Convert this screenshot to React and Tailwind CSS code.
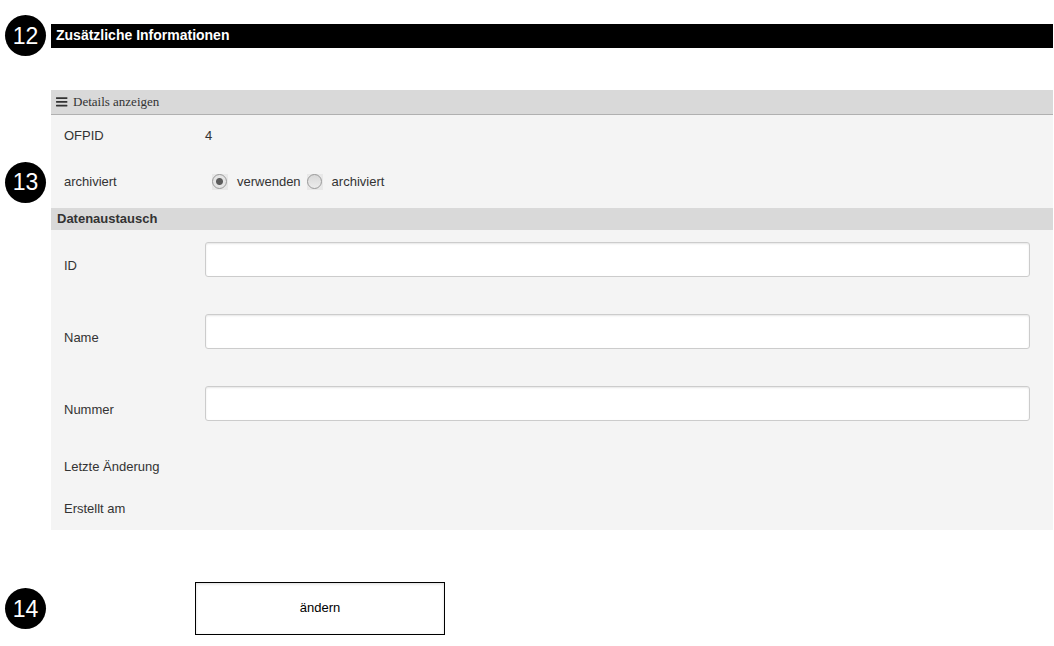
// ─── Additional Information Form ───
import React from 'react';

const exchangeFields = [
  { id: 'exchange-id', label: 'ID' },
  { id: 'exchange-name', label: 'Name' },
  { id: 'exchange-number', label: 'Nummer' },
];

const timestamps = ['Letzte Änderung', 'Erstellt am'];

const archiveOptions = [
  { value: 'use', label: 'verwenden' },
  { value: 'archived', label: 'archiviert' },
];

function StepBadge({ children }) {
  return (
    <span className="flex size-[41px] shrink-0 items-center justify-center rounded-full bg-black text-[23px] text-white">
      {children}
    </span>
  );
}

// Every row keeps the same gutter on the left for an optional step number
function Row({ step, className = '', children }) {
  return (
    <div className="flex items-center">
      <div className="flex w-[51px] shrink-0 pl-[5px]">{step && <StepBadge>{step}</StepBadge>}</div>
      <div className={`min-w-0 flex-1 ${className}`}>{children}</div>
    </div>
  );
}

function BarsIcon() {
  return (
    <svg width="12" height="10" viewBox="0 0 12 10" fill="currentColor" aria-hidden="true">
      <rect y="0.2" width="11.4" height="1.7" rx="0.4" />
      <rect y="4" width="11.4" height="1.7" rx="0.4" />
      <rect y="7.8" width="11.4" height="1.7" rx="0.4" />
    </svg>
  );
}

export default function App() {
  return (
    <form
      className="pt-[15px] pr-px font-['Liberation_Sans',Arial,sans-serif] text-[13px] leading-5 text-[#333]"
      onSubmit={(e) => e.preventDefault()}
    >
      <Row step="12">
        <h1 className="flex h-6 items-center bg-black px-[5px] pb-px text-sm font-bold text-white">
          Zusätzliche Informationen
        </h1>
      </Row>

      {/* Details panel */}
      <div className="mt-[34px]">
        <Row>
          <button
            type="button"
            className="flex h-[25px] w-full items-center gap-[5px] border-b border-[#b0b0b0] bg-[#d9d9d9] px-[5px] font-['Liberation_Serif','Times_New_Roman',serif]"
          >
            <BarsIcon />
            Details anzeigen
          </button>
        </Row>

        <Row className="flex h-[41px] items-center bg-[#f4f4f4] pl-[13px]">
          <span className="w-[141px]">OFPID</span>
          <span>4</span>
        </Row>

        <Row step="13" className="bg-[#f4f4f4] pl-[13px]">
          <div role="radiogroup" aria-labelledby="archive-label" className="flex h-[52px] items-center gap-[6px]">
            <span id="archive-label" className="w-[142px]">
              archiviert
            </span>
            {archiveOptions.map((option, i) => (
              <label key={option.value} className="flex items-center gap-[9px]">
                <span className="flex size-4 bg-[#e8e8e8]">
                  <input
                    type="radio"
                    name="archive"
                    value={option.value}
                    defaultChecked={i === 0}
                    className="size-[15px] appearance-none rounded-full border border-[#999] bg-linear-to-b from-[#d8d8d8] to-[#ececec] checked:bg-[radial-gradient(circle,#5c5c5c_3px,#e4e4e4_4px)]"
                  />
                </span>
                {option.label}
              </label>
            ))}
          </div>
        </Row>

        <Row>
          <h2 className="flex h-[22px] items-center bg-[#d9d9d9] px-[6px] font-bold">Datenaustausch</h2>
        </Row>

        {exchangeFields.map((field) => (
          <Row key={field.id} className="flex h-[72px] items-start bg-[#f4f4f4] pt-3 pr-[23px] pl-[13px]">
            <label htmlFor={field.id} className="w-[141px] shrink-0 pt-[14px]">
              {field.label}
            </label>
            <input
              id={field.id}
              type="text"
              className="h-[35px] min-w-0 flex-1 rounded-[3px] border border-[#ccc] bg-white px-3 shadow-[inset_0_1px_2px_rgba(0,0,0,0.1)]"
            />
          </Row>
        ))}

        {timestamps.map((label) => (
          <Row key={label} className="flex h-[42px] items-center bg-[#f4f4f4] pl-[13px]">
            {label}
          </Row>
        ))}
      </div>

      <div className="mt-[52px] mb-3">
        <Row step="14" className="pl-36">
          <button
            type="submit"
            className="block h-[53px] w-[250px] border border-black bg-white pb-[2px] text-black shadow-[inset_0_1px_3px_rgba(0,0,0,0.15)]"
          >
            ändern
          </button>
        </Row>
      </div>
    </form>
  );
}
